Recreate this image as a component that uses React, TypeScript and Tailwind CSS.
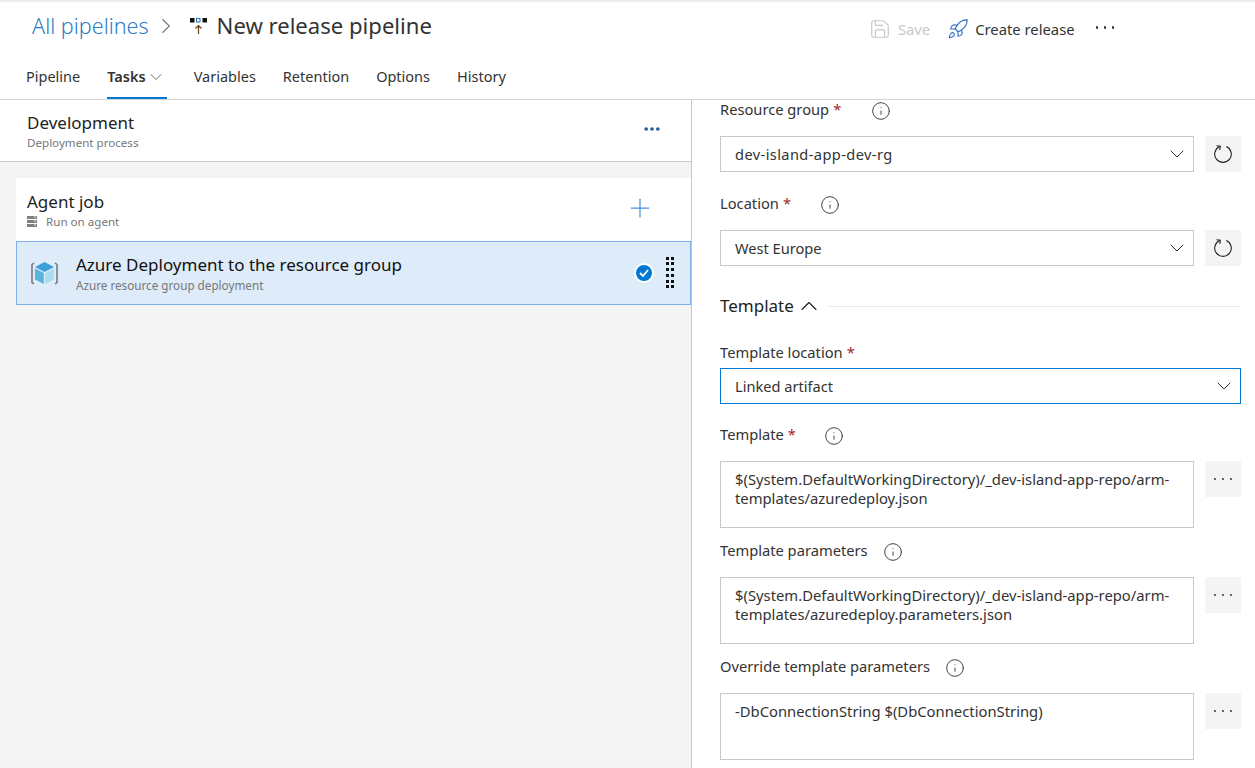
import { ChevronDown, ChevronRight, ChevronUp, Ellipsis, Info, Plus, Rocket, Save } from 'lucide-react';
import type { ReactNode } from 'react';

const tabs = ['Variables', 'Retention', 'Options', 'History'];

function ReleaseIcon() {
    return (
        <svg width="17" height="16" viewBox="0 0 17 16" className="shrink-0">
            <rect x="0" y="0" width="4.500" height="4.500" fill="#111" />
            <rect x="6.500" y="0.500" width="3.500" height="3.500" fill="#fff" stroke="#2b6cb0" />
            <rect x="12.500" y="0" width="4.500" height="4.500" fill="#111" />
            <path d="M8.500 16V7.500M5.500 10.500l3-3 3 3" fill="none" stroke="#6b3d12" strokeWidth="1.2" />
        </svg>
    );
}

function CubeIcon() {
    return (
        <svg width="27" height="23" viewBox="0 0 27 23" className="shrink-0">
            <path d="M3 1L1 2.500V20.500L3 22M24 1l2 1.500V20.500L24 22" fill="none" stroke="#6f747b" strokeWidth="1.5" />
            <path d="M13.500 0L23 5l-9.500 5L4 5z" fill="#3b9fd8" />
            <path d="M4 6.500l8.800 4.500V22L4 17.500z" fill="#59b4d9" />
            <path d="M23 6.500L14.200 11V22L23 17.500z" fill="#a8dcee" />
        </svg>
    );
}

function AgentIcon() {
    return (
        <svg width="10" height="11" viewBox="0 0 10 11" className="shrink-0">
            <path d="M0 0h10v3H0zM0 4h10v3H0zM0 8h10v3H0z" fill="#808080" />
            <path d="M7 1h2M7 5h2M7 9h2" stroke="#fff" strokeWidth="0.800" />
        </svg>
    );
}

function RefreshIcon() {
    return (
        <svg width="19" height="19" viewBox="0 0 19 19" className="shrink-0" fill="none" stroke="#222" strokeWidth="1.100">
            <path d="M12.300 1.500A8.300 8.300 0 1 1 5.700 1.500" />
            <path d="M2.500 0.800L6.300 1.200L5.800 4.800" />
        </svg>
    );
}

function DragDots() {
    return (
        <div className="grid w-[8px] grid-cols-2 gap-x-[2px] gap-y-[2.800px]">
            {Array.from({ length: 12 }).map((_, i) => (
                <span key={i} className="size-[3px] bg-[#111]" />
            ))}
        </div>
    );
}

function Dots() {
    return (
        <span className="flex gap-[5.500px]">
            <span className="size-[2.500px] rounded-full bg-[#333]" />
            <span className="size-[2.500px] rounded-full bg-[#333]" />
            <span className="size-[2.500px] rounded-full bg-[#333]" />
        </span>
    );
}

function FieldLabel({ text, required, gap }: { text: string; required?: boolean; gap: string }) {
    return (
        <div className="flex h-[24px] items-center text-[14.700px] text-[#333]">
            <span className="pb-[2px]">{text}</span>
            {required && <span className="ml-[4px] pb-[2px] text-[#a4262c]">*</span>}
            <Info className={`${gap} mt-[2px] size-[20px] text-[#333]`} strokeWidth={1.1} />
        </div>
    );
}

function SideButton({ children }: { children: ReactNode }) {
    return (
        <button type="button" className="flex size-[36px] shrink-0 items-center justify-center bg-[#f4f4f4] text-[#222]">
            {children}
        </button>
    );
}

function Select({ value, wide }: { value: string; wide?: boolean }) {
    return (
        <div className="flex gap-[11px]">
            <div className="flex h-[36px] w-[474px] items-center justify-between border border-[#c8c8c8] pr-[4px] pl-[14px] text-[14.600px] text-[#333]">
                <span className={wide ? 'pt-[1px] tracking-[0.400px]' : 'pt-[1px]'}>{value}</span>
                <ChevronDown className="size-[24px] text-[#333]" strokeWidth={1} />
            </div>
            <SideButton>
                <RefreshIcon />
            </SideButton>
        </div>
    );
}

function Area({ lines }: { lines: string[] }) {
    return (
        <div className="flex gap-[11px]">
            <div className="h-[67px] w-[474px] border border-[#c8c8c8] px-[14px] pt-[8px] text-[14.800px] leading-[19px] text-[#333]">
                {lines.map((l) => (
                    <div key={l} className="whitespace-nowrap">{l}</div>
                ))}
            </div>
            <SideButton>
                <Dots />
            </SideButton>
        </div>
    );
}

export default function App() {
    return (
        <div className="flex h-screen flex-col overflow-hidden bg-white font-['Noto_Sans',sans-serif] text-[#333]">
            <header className="h-[100px] shrink-0 border-t-2 border-b border-t-[#ededed] border-b-[#d4d4d4]">
                <div className="flex h-[48px] items-center pl-[32px]">
                    <span className="text-[21.600px] font-light text-[#2b7cc4]">All pipelines</span>
                    <ChevronRight className="mr-[11px] ml-[4px] size-[26px] text-[#777]" strokeWidth={1} />
                    <ReleaseIcon />
                    <span className="ml-[10px] text-[22.100px] text-[#333]">New release pipeline</span>
                    <div className="mt-[6px] ml-[437px] flex items-center text-[14.800px]">
                        <Save className="size-[22px] text-[#c8c8c8]" strokeWidth={1.3} />
                        <span className="ml-[7px] text-[#c8c8c8]">Save</span>
                        <Rocket className="ml-[17px] size-[22px] text-[#2f6fc4]" strokeWidth={1.2} />
                        <span className="ml-[6px] text-[#333]">Create release</span>
                        <span className="mb-[3px] ml-[21px]"><Dots /></span>
                    </div>
                </div>
                <nav className="flex h-[49px] items-stretch pl-[26px] text-[14.500px]">
                    <span className="flex items-center border-b-2 border-transparent pt-[7px]">Pipeline</span>
                    <span className="ml-[27px] flex items-center border-b-2 border-[#0078d4] pt-[7px] pr-[1px] font-semibold text-[#333]">
                        Tasks
                        <ChevronDown className="size-[20px] text-[#555]" strokeWidth={1} />
                    </span>
                    <div className="ml-[27px] flex items-center gap-[27px] pt-[5px]">
                        {tabs.map((t) => (
                            <span key={t}>{t}</span>
                        ))}
                    </div>
                </nav>
            </header>

            <div className="flex min-h-0 flex-1">
                <aside className="w-[692px] shrink-0 border-r border-[#c8c8c8] bg-[#f4f4f4]">
                    <div className="flex h-[62px] items-center justify-between border-b border-[#c8c8c8] bg-white pr-[29px] pl-[27px]">
                        <div className="pt-[2px]">
                            <div className="text-[17px] leading-[22px] text-[#222]">Development</div>
                            <div className="mt-[1px] text-[11.600px] leading-[16px] text-[#777]">Deployment process</div>
                        </div>
                        <Ellipsis className="mb-[4px] size-[20px] text-[#1b5a9c]" strokeWidth={2.4} />
                    </div>
                    <div className="pt-[16px] pl-[16px]">
                        <div className="flex h-[63px] items-center justify-between bg-white pr-[36px] pl-[11px]">
                            <div>
                                <div className="text-[17px] leading-[24px] text-[#222]">Agent job</div>
                                <div className="flex items-center gap-[9px] text-[11.600px] leading-[16px] text-[#777]">
                                    <AgentIcon />
                                    Run on agent
                                </div>
                            </div>
                            <Plus className="mb-[4px] size-[30px] text-[#4a90d9]" strokeWidth={1} />
                        </div>
                        <div className="flex h-[64px] items-center border border-[#7fb0ee] bg-[#deecf9] pr-[16px] pl-[14px]">
                            <CubeIcon />
                            <div className="ml-[18px] flex-1">
                                <div className="text-[17px] leading-[24px] text-[#111]">Azure Deployment to the resource group</div>
                                <div className="text-[11.700px] leading-[16px] text-[#777]">Azure resource group deployment</div>
                            </div>
                            <span className="mr-[1px] flex size-[20px] items-center justify-center rounded-full border-2 border-white bg-[#0078d4]">
                                <svg width="10" height="8" viewBox="0 0 10 8">
                                    <path d="M1 4l3 3 5-6" fill="none" stroke="#fff" strokeWidth="1.800" />
                                </svg>
                            </span>
                            <div className="mb-[1px] ml-[11px]"><DragDots /></div>
                        </div>
                    </div>
                </aside>

                <main className="min-w-0 flex-1 pl-[28px]">
                    <div className="-mt-[2px]"><FieldLabel text="Resource group" required gap="ml-[30px]" /></div>
                    <div className="mt-[14px]"><Select value="dev-island-app-dev-rg" wide /></div>
                    <div className="mt-[20px]"><FieldLabel text="Location" required gap="ml-[29px]" /></div>
                    <div className="mt-[14px]"><Select value="West Europe" /></div>
                    <div className="mt-[26px] flex h-[28px] w-[521px] items-center text-[17px] text-[#222]">
                        <span>Template</span>
                        <ChevronUp className="ml-[1px] size-[28px]" strokeWidth={1} />
                        <span className="ml-[5px] h-px flex-1 bg-[#eaeaea]" />
                    </div>
                    <div className="mt-[21px]"><FieldLabel text="Template location" required gap="hidden" /></div>
                    <div className="mt-[3px] flex h-[36px] w-[521px] items-center justify-between border border-[#0078d4] pr-[4px] pl-[14px] text-[14.600px]">
                        <span className="pt-[1px]">Linked artifact</span>
                        <ChevronDown className="size-[24px] text-[#333]" strokeWidth={1} />
                    </div>
                    <div className="mt-[19px]"><FieldLabel text="Template" required gap="ml-[28px]" /></div>
                    <div className="mt-[14px]">
                        <Area lines={['$(System.DefaultWorkingDirectory)/_dev-island-app-repo/arm-', 'templates/azuredeploy.json']} />
                    </div>
                    <div className="mt-[11px]"><FieldLabel text="Template parameters" gap="ml-[15px]" /></div>
                    <div className="mt-[14px]">
                        <Area lines={['$(System.DefaultWorkingDirectory)/_dev-island-app-repo/arm-', 'templates/azuredeploy.parameters.json']} />
                    </div>
                    <div className="mt-[11px]"><FieldLabel text="Override template parameters" gap="ml-[15px]" /></div>
                    <div className="mt-[14px]"><Area lines={['-DbConnectionString $(DbConnectionString)']} /></div>
                </main>
            </div>
        </div>
    );
}
